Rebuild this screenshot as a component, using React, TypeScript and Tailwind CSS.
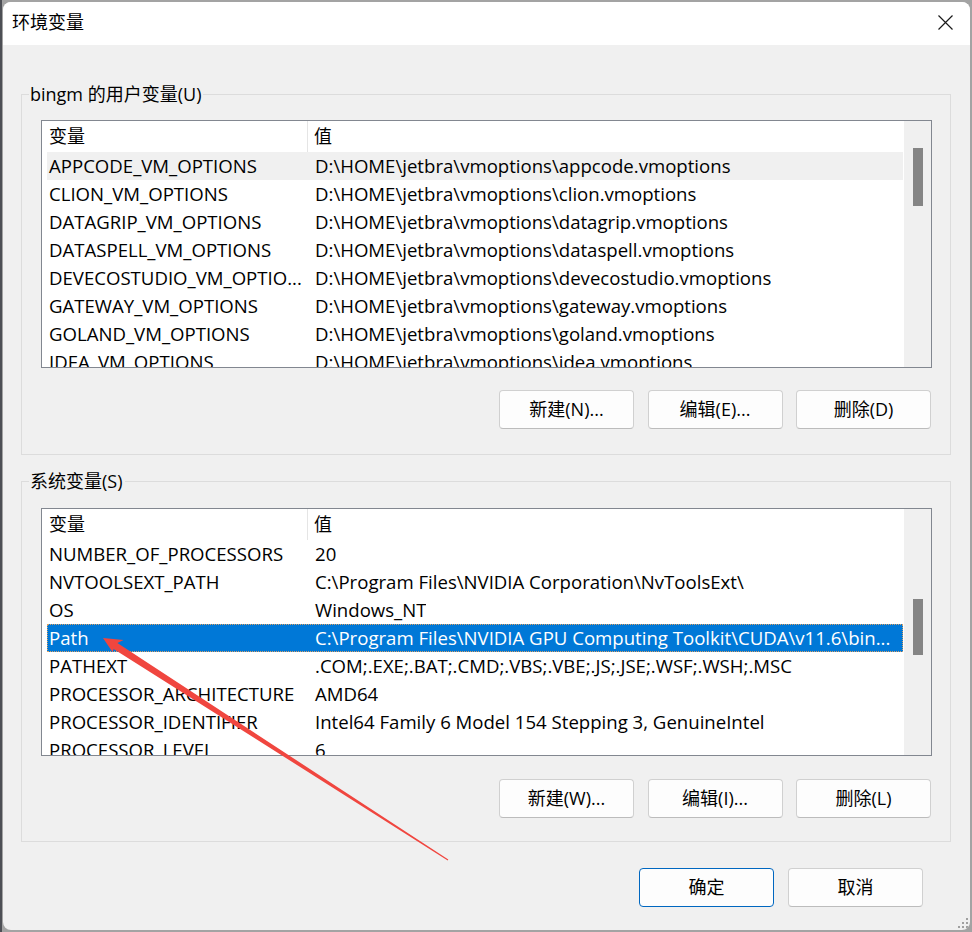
import React from "react";

type Row = { name: string; value: string };

const userRows: Row[] = [
  { name: "APPCODE_VM_OPTIONS", value: "D:\\HOME\\jetbra\\vmoptions\\appcode.vmoptions" },
  { name: "CLION_VM_OPTIONS", value: "D:\\HOME\\jetbra\\vmoptions\\clion.vmoptions" },
  { name: "DATAGRIP_VM_OPTIONS", value: "D:\\HOME\\jetbra\\vmoptions\\datagrip.vmoptions" },
  { name: "DATASPELL_VM_OPTIONS", value: "D:\\HOME\\jetbra\\vmoptions\\dataspell.vmoptions" },
  { name: "DEVECOSTUDIO_VM_OPTIO...", value: "D:\\HOME\\jetbra\\vmoptions\\devecostudio.vmoptions" },
  { name: "GATEWAY_VM_OPTIONS", value: "D:\\HOME\\jetbra\\vmoptions\\gateway.vmoptions" },
  { name: "GOLAND_VM_OPTIONS", value: "D:\\HOME\\jetbra\\vmoptions\\goland.vmoptions" },
  { name: "IDEA_VM_OPTIONS", value: "D:\\HOME\\jetbra\\vmoptions\\idea.vmoptions" },
];

const sysRows: Row[] = [
  { name: "NUMBER_OF_PROCESSORS", value: "20" },
  { name: "NVTOOLSEXT_PATH", value: "C:\\Program Files\\NVIDIA Corporation\\NvToolsExt\\" },
  { name: "OS", value: "Windows_NT" },
  { name: "Path", value: "C:\\Program Files\\NVIDIA GPU Computing Toolkit\\CUDA\\v11.6\\bin..." },
  { name: "PATHEXT", value: ".COM;.EXE;.BAT;.CMD;.VBS;.VBE;.JS;.JSE;.WSF;.WSH;.MSC" },
  { name: "PROCESSOR_ARCHITECTURE", value: "AMD64" },
  { name: "PROCESSOR_IDENTIFIER", value: "Intel64 Family 6 Model 154 Stepping 3, GenuineIntel" },
  { name: "PROCESSOR_LEVEL", value: "6" },
];

function ListView({
  rows,
  hover,
  selected,
  thumbTop,
  thumbH,
}: {
  rows: Row[];
  hover?: number;
  selected?: number;
  thumbTop: number;
  thumbH: number;
}) {
  return (
    <div className="flex h-[248px] w-[891px] border border-[#828790] bg-white overflow-hidden">
      <div className="flex w-[862px] flex-col pl-[5px] pr-[1px]">
        <div className="flex h-[31px] shrink-0 items-center text-black">
          <div className="flex h-full w-[261px] items-center border-r border-[#e5e5e5] pl-[2px]">变量</div>
          <div className="pl-[6px]">值</div>
        </div>
        {rows.map((r, i) => {
          const isSel = i === selected;
          const isHover = i === hover;
          return (
            <div
              key={r.name}
              className={
                "flex h-[28px] shrink-0 items-center whitespace-nowrap text-[18.6px] " +
                (isSel
                  ? "bg-[#0078d7] text-white outline-1 outline-dotted outline-[#d9a066] -outline-offset-1"
                  : isHover
                  ? "bg-[#f0f0f0] text-black"
                  : "text-black")
              }
            >
              <div className="w-[261px] shrink-0 overflow-hidden pl-[2px]">{r.name}</div>
              <div className="overflow-hidden pl-[7px]">{r.value}</div>
            </div>
          );
        })}
      </div>
      <div className="flex w-[27px] flex-col items-center bg-[#f0f0f0]">
        <div style={{ marginTop: thumbTop, height: thumbH }} className="w-[10px] bg-[#858585]" />
      </div>
    </div>
  );
}

function Btn({ children, primary }: { children: React.ReactNode; primary?: boolean }) {
  return (
    <div
      className={
        "flex h-[39px] w-[135px] items-center justify-center rounded-[4px] border bg-[#fdfdfd] text-black " +
        (primary ? "border-[#0067c0]" : "border-[#d0d0d0] border-b-[#bcbcbc]")
      }
    >
      {children}
    </div>
  );
}

function Group({
  label,
  children,
  className,
}: {
  label: string;
  children: React.ReactNode;
  className?: string;
}) {
  return (
    <div className={"relative h-[361px] border border-[#dcdcdc] " + (className ?? "")}>
      <span className="absolute -top-[13px] left-[7px] bg-[#f0f0f0] pl-[1px] pr-[2px] leading-[24px] text-black">
        {label}
      </span>
      {children}
    </div>
  );
}

export default function App() {
  return (
    <div className="relative h-[932px] w-[972px] overflow-hidden border-l-[2px] border-[#4d4f55] bg-[#a3a3a3] pl-[1px] pt-[2px] font-[family-name:'Open_Sans','Noto_Sans_CJK_SC',sans-serif] text-[18px]">
      <div className="relative flex h-[928px] w-[967px] flex-col overflow-hidden rounded-[8px] bg-[#f0f0f0]">
        {/* Title bar */}
        <div className="flex h-[43px] shrink-0 items-start justify-between bg-white">
          <div className="pl-[9px] pt-[8px] leading-[24px] text-black">环境变量</div>
          <svg className="mr-[17px] mt-[13px]" width="15" height="15" viewBox="0 0 15 15">
            <path d="M0.5 0.5 L14.5 14.5 M14.5 0.5 L0.5 14.5" stroke="#1a1a1a" strokeWidth="1.2" fill="none" />
          </svg>
        </div>

        {/* Body */}
        <div className="flex flex-1 flex-col pl-[18px] pr-[19px] pt-[49px]">
          <Group label="bingm 的用户变量(U)">
            <div className="flex flex-col pl-[19px] pt-[25px]">
              <ListView rows={userRows} hover={0} thumbTop={27} thumbH={58} />
              <div className="mt-[22px] flex w-[890px] justify-end gap-[13.5px]">
                <Btn>新建(N)...</Btn>
                <Btn>编辑(E)...</Btn>
                <Btn>删除(D)</Btn>
              </div>
            </div>
          </Group>

          <Group label="系统变量(S)" className="mt-[26px]">
            <div className="flex flex-col pl-[19px] pt-[26px]">
              <ListView rows={sysRows} selected={3} thumbTop={90} thumbH={56} />
              <div className="mt-[23px] flex w-[890px] justify-end gap-[13.5px]">
                <Btn>新建(W)...</Btn>
                <Btn>编辑(I)...</Btn>
                <Btn>删除(L)</Btn>
              </div>
            </div>
          </Group>

          <div className="mt-[26px] flex justify-end gap-[14px] pr-[28px]">
            <Btn primary>确定</Btn>
            <Btn>取消</Btn>
          </div>
        </div>

        {/* resize grip */}
        <svg className="absolute bottom-[2px] right-[2px]" width="10" height="10" viewBox="0 0 10 10">
          <rect x="8" y="0" width="2" height="2" fill="#a0a0a0" />
          <rect x="4" y="4" width="2" height="2" fill="#a0a0a0" />
          <rect x="8" y="4" width="2" height="2" fill="#a0a0a0" />
          <rect x="0" y="8" width="2" height="2" fill="#a0a0a0" />
          <rect x="4" y="8" width="2" height="2" fill="#a0a0a0" />
          <rect x="8" y="8" width="2" height="2" fill="#a0a0a0" />
        </svg>
      </div>

      {/* annotation arrow */}
      <svg className="pointer-events-none absolute left-0 top-0" width="972" height="932" viewBox="0 0 972 932">
        <polygon
          points="101,638 121.5,640 115.4,643.1 446.3,859.6 445.7,860.4 111.6,648.9 110.5,652"
          fill="#f0463f"
        />
      </svg>
    </div>
  );
}
